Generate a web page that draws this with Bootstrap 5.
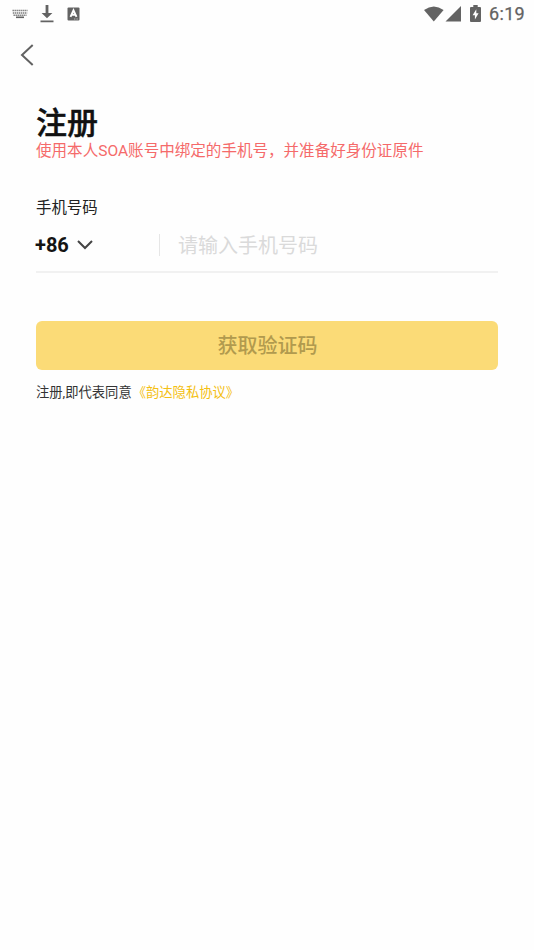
<!DOCTYPE html>
<html lang="zh-CN">
<head>
<meta charset="utf-8">
<meta name="viewport" content="width=device-width, initial-scale=1">
<title>注册</title>
<link href="https://cdn.jsdelivr.net/npm/bootstrap@5.3.0/dist/css/bootstrap.min.css" rel="stylesheet">
<style>
body{font-family:Roboto,"Noto Sans CJK SC",sans-serif;background:#fefefe;color:#1c1c1c;min-height:950px}
svg{display:block;flex:none}
.status-bar{height:27px;padding:0 9px 0 12px;color:#636363}
.icon-download{margin-left:8px}
.clock{font-size:18px;line-height:27px;font-weight:400;letter-spacing:.3px;-webkit-text-stroke:.25px #636363}
.top-bar{height:56px;padding-left:20px}
.page{padding:22px 36px 0}
.title{font-size:31px;line-height:37px;font-weight:500;color:#111;-webkit-text-stroke:.45px #111}
.hint{font-size:15.55px;line-height:18px;color:#f56a6a}
.field-label{font-size:15.4px;line-height:20px;margin-top:38px;margin-bottom:1px;color:#222}
.phone-row{height:54px;border-bottom:2px solid #f1f1f1}
.code-pick{width:123px;font-size:20px;font-weight:700;gap:8px;color:#141414}
.code-pick span{margin-left:-1px}
.phone-input{border-left:1px solid #e6e6e6;height:22px;padding:2px 0 0 18px;font-size:20px;line-height:20px;color:#333;border-radius:0;background:transparent}
.phone-input::placeholder{color:#dadada;opacity:1}
.btn-code,.btn-code:disabled{height:49px;margin-top:48px;border:0;border-radius:6px;background:#fbdb77;color:#b19a4e;opacity:1;font-size:20px;line-height:24px;font-weight:500;padding:1px 0 0 1px}
.terms{font-size:13.3px;line-height:20px;margin-top:13px;color:#333}
.terms a{color:#f4c012;margin-left:1px}
</style>
</head>
<body>
<header class="status-bar d-flex align-items-center justify-content-between">
  <div class="d-flex align-items-center">
    <svg width="16" height="10" viewBox="0 0 16 10" fill="none" stroke="currentColor"><path d="M.5 1.5h15M.8 4h14.4M1.5 6.3h13" stroke-width="1.5" stroke-dasharray="1.4 .6" opacity=".85"/><path d="M4 8.3h8" stroke-width="1.6"/></svg>
    <svg class="icon-download" width="30" height="18" viewBox="0 0 30 18" fill="currentColor"><path d="M9.600 0h2.800v8h4l-5.400 5.300L5.600 8h4zM4.500 15.400h13v1.800h-13z"/></svg>
    <svg width="14" height="14" viewBox="0 0 14 14"><rect x="1.500" y=".5" width="12" height="13" rx="1" fill="currentColor"/><path d="M4.500 9.800 7.500 3.300l3 6.500M5.600 7.700h3.800" fill="none" stroke="#fff" stroke-width="1.900"/><path d="M8 12h4" stroke="#bbb" stroke-dasharray="1 .6"/></svg>
  </div>
  <div class="d-flex align-items-center">
    <svg width="20" height="16" viewBox="0 0 20 16" fill="currentColor"><path d="M0 4Q9.800-3.200 19.600 4L9.800 15.500z"/></svg>
    <svg width="18" height="16" viewBox="0 0 18 16" fill="currentColor"><path d="M17 0v15.500H1.500z"/></svg>
    <svg class="ms-2" width="11" height="18" viewBox="0 0 11 18"><path d="M3.300 0h4.400v2H10q1 0 1 1v13q0 1-1 1H1q-1 0-1-1V3q0-1 1-1h2.300z" fill="currentColor"/><path d="M6.300 4.300 2.600 10.200h2.300v4.400l3.700-6.300H6.300z" fill="#fff"/></svg>
    <span class="clock ms-2">6:19</span>
  </div>
</header>
<nav class="top-bar d-flex align-items-center">
  <svg width="14" height="22" viewBox="0 0 14 22" fill="none" stroke="#626262" stroke-width="2"><path d="M12.700 1 2 11l10.700 10"/></svg>
</nav>
<main class="page">
  <h1 class="title mb-0">注册</h1>
  <p class="hint mb-0 text-nowrap">使用本人SOA账号中绑定的手机号，并准备好身份证原件</p>
  <form>
    <label class="field-label d-block" for="phone">手机号码</label>
    <div class="phone-row d-flex align-items-center">
      <div class="code-pick d-flex align-items-center flex-shrink-0"><span>+86</span>
        <svg width="16" height="10" viewBox="0 0 16 10" fill="none" stroke="#444" stroke-width="2"><path d="m1 1 7 7 7-7"/></svg>
      </div>
      <input id="phone" class="phone-input w-100 border-top-0 border-end-0 border-bottom-0" type="tel" placeholder="请输入手机号码">
    </div>
    <button class="btn btn-code w-100 d-block" type="button" disabled>获取验证码</button>
    <p class="terms mb-0">注册,即代表同意<a class="text-decoration-none" href="#">《韵达隐私协议》</a></p>
  </form>
</main>
<script src="https://cdn.jsdelivr.net/npm/bootstrap@5.3.0/dist/js/bootstrap.bundle.min.js"></script>
</body>
</html>
